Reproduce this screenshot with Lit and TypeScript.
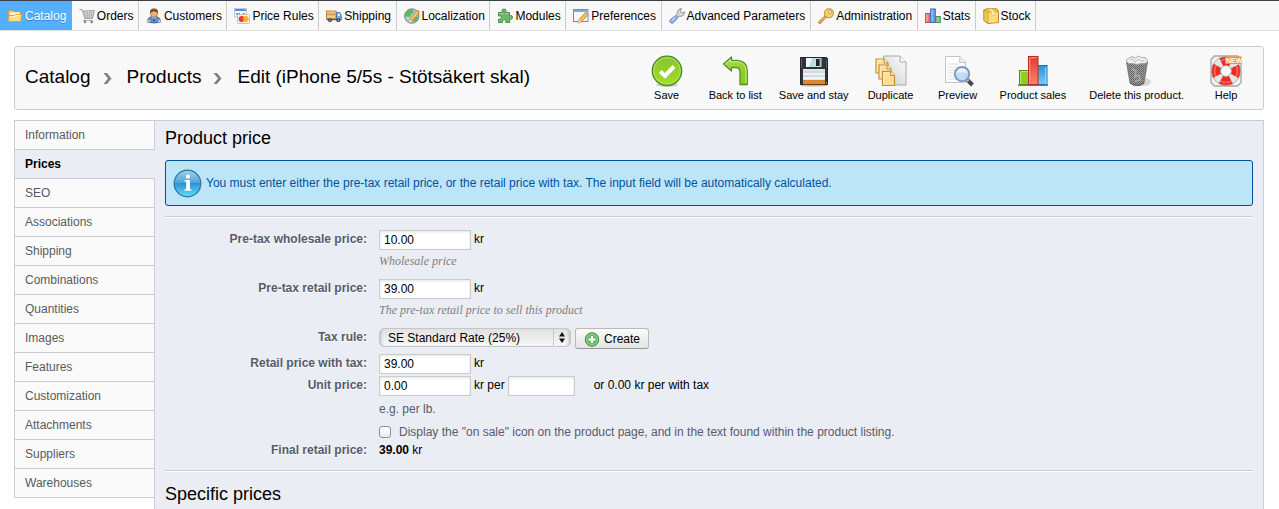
import { LitElement, html, css, svg, TemplateResult } from 'lit';
import { customElement, state } from 'lit/decorators.js';
import { classMap } from 'lit/directives/class-map.js';

const small = (body: unknown) =>
  html`<svg class="icon16" viewBox="0 0 16 16" aria-hidden="true">${body}</svg>`;

const large = (body: unknown) =>
  html`<svg class="icon32" viewBox="0 0 32 32" aria-hidden="true">${body}</svg>`;

const menu: { label: string; icon: TemplateResult }[] = [
  {
    label: 'Catalog',
    icon: small(svg`
      <path d="M1.5 13.500V3.500Q1.500 2.500 2.500 2.500H6L7 3.500H13.500V6" fill="#f0c860" stroke="#cf9d33"/>
      <path d="M3 4.500H12.500V8H3Z" fill="#fff" stroke="#e8d9ae" stroke-width=".6"/>
      <path d="M1.500 13.500L2 7.500H7L8.500 6.500H14.500L13.800 13.500Z" fill="#fbe08a" stroke="#d8a63c"/>
      <path d="M3 8.500H7.500L9 7.500H13.500" stroke="#fff6cf" fill="none"/>`),
  },
  {
    label: 'Orders',
    icon: small(svg`
      <path d="M.5 1.500H3L6 10.500H13.500L15.500 2.500L3.300 3" fill="#e6e6e6" stroke="#979797" stroke-width=".9"/>
      <path d="M6 3V10M8.300 3V10M10.600 3V10M12.900 3V10M3.800 5H14.500M4.500 7.100H14M5 9H14" stroke="#a4a4a4" stroke-width=".7"/>
      <path d="M6.500 10.500L4.500 12.700H14" fill="none" stroke="#a5a5a5"/>
      <circle cx="6" cy="14" r="1.300" fill="#858585"/><circle cx="12.700" cy="14" r="1.300" fill="#858585"/>`),
  },
  {
    label: 'Customers',
    icon: small(svg`
      <path d="M1.200 14Q1.500 9.500 5.500 8.500H10.500Q14.500 9.500 14.800 14Q8 16 1.200 14Z" fill="#5b8fd0" stroke="#3d6aa8"/>
      <path d="M6 8.500L8 14L10 8.500Z" fill="#d9e8f8"/><path d="M7.400 9.500H8.600L9 13L8 14L7 13Z" fill="#2f5ca0"/>
      <ellipse cx="8" cy="5.300" rx="3.500" ry="4" fill="#eab07c" stroke="#a4683a" stroke-width=".7"/>
      <path d="M4 5.400Q3.300 .5 8 .5Q12.700 .5 12 5.400Q11 3.600 8.500 3.500Q5.500 3.400 4 5.400Z" fill="#8a4a1f"/>
      <circle cx="2.600" cy="13.200" r="1.400" fill="#f1bf8e"/><circle cx="13.400" cy="13.200" r="1.400" fill="#f1bf8e"/>`),
  },
  {
    label: 'Price Rules',
    icon: small(svg`
      <rect x=".5" y=".5" width="12" height="8.500" fill="#f4f8fd" stroke="#b4c9e4"/>
      <rect x="1" y="1" width="11" height="2" fill="#5f8fd0"/><path d="M2.500 5L3.200 7L4 5M5.500 5V7M7 7H8.200M9.500 7V5L11 7" stroke="#3f66b0" fill="none" stroke-width=".9"/>
      <rect x="3.500" y="6.500" width="12" height="9" rx="1" fill="#fff3dc" stroke="#c9c3b4"/>
      <circle cx="7.700" cy="11" r="3" fill="#e8323c"/><circle cx="11.600" cy="11" r="3" fill="#f6b02c"/><path d="M9.650 8.700Q11.200 11 9.650 13.300Q8.200 11 9.650 8.700" fill="#f07030"/>`),
  },
  {
    label: 'Shipping',
    icon: small(svg`
      <rect x=".5" y="3" width="9.500" height="7.500" fill="#f2c987" stroke="#b98b4c"/>
      <rect x="1" y="5.500" width="8.500" height="1.800" fill="#cd9b58"/>
      <path d="M10.500 4.500H13.500Q14.700 4.500 15.200 8V11.500H10.500Z" fill="#7ea9dc" stroke="#4872a8"/>
      <path d="M11.700 5.500H13.400L14.200 8H11.700Z" fill="#e6f1fb"/><path d="M.5 11H15.500V12.300H.5Z" fill="#5a6270"/>
      <circle cx="4" cy="12.200" r="1.900" fill="#3d3d3d"/><circle cx="12.300" cy="12.200" r="1.900" fill="#3d3d3d"/>
      <circle cx="4" cy="12.200" r=".7" fill="#ccc"/><circle cx="12.300" cy="12.200" r=".7" fill="#ccc"/>`),
  },
  {
    label: 'Localization',
    icon: small(svg`
      <circle cx="7.800" cy="8" r="7.200" fill="#a9d6ee" stroke="#55906a"/>
      <path d="M2 4Q5 .8 9 1.500L10 4L7 6.500L6 9L3 8.500L1.200 9Q.8 6 2 4ZM8 10L12 8.500L14.700 9Q14 12.500 11 14.300L8.500 13Z" fill="#63b561"/>
      <path d="M4.500 14.800L5.500 11.500L12.700 2.500L15.300 4.500L8 13.400Z" fill="#f7c15a" stroke="#b87a2e" stroke-width=".8"/>
      <path d="M12.700 2.500L13.600 1.600L16 3.500L15.300 4.500Z" fill="#e59b8c"/><path d="M4.500 14.800L5.500 11.500L8 13.400Z" fill="#f6e2c0"/>`),
  },
  {
    label: 'Modules',
    icon: small(svg`
      <path d="M1.500 4.500H5.500Q4 1 7 1Q10 1 8.700 4.500H12.500V8Q15.500 6.700 15.500 9.500Q15.500 12.200 12.500 11V14.500H8.800Q10 11.800 7.200 11.800Q4.500 11.800 5.500 14.500H1.500V11Q4.500 12 4.500 9.500Q4.500 7 1.500 8Z" fill="#6fb56d" stroke="#4c934c"/>
      <path d="M2.500 5.500H6.500M8.500 5.500H11.500" stroke="#a5d8a2"/>`),
  },
  {
    label: 'Preferences',
    icon: small(svg`
      <rect x=".5" y="1.500" width="14.500" height="12" fill="#f6faff" stroke="#5b8fd6"/><rect x="1" y="2" width="13.500" height="2" fill="#7fabe6"/>
      <path d="M4.800 15L5.800 11.800L12.500 4.500L15 6.600L8.300 14Z" fill="#f7c15a" stroke="#b87a2e" stroke-width=".8"/>
      <path d="M12.500 4.500L13.300 3.700L15.800 5.800L15 6.600Z" fill="#e59b8c"/><path d="M4.800 15L5.800 11.800L8.300 14Z" fill="#f6e2c0"/>`),
  },
  {
    label: 'Advanced Parameters',
    icon: small(svg`
      <path d="M8.200 6.500Q7.500 2.500 11 .8L12.500 .6L11.300 3.500L13 5L15.500 3.800Q15.800 7.500 12.500 8.300L10 8.200L8 10L6.300 8.200Z" fill="#d9d9d9" stroke="#8c8c8c" stroke-width=".9"/>
      <path d="M6.800 7.500L9 9.700L4.600 14.600Q3 16 1.400 14.500Q0 13 1.500 11.400Z" fill="#94b6ee" stroke="#5b7fc4" stroke-width=".9"/><path d="M6.500 9L2.500 12.800" stroke="#d3e2fb"/>`),
  },
  {
    label: 'Administration',
    icon: small(svg`
      <path d="M7.500 7.500L.8 13.500V15.300H3L3.700 14V12.800H5.300L6 11.300L9 9Z" fill="#f3bd42" stroke="#b7802a" stroke-width=".9"/>
      <path d="M10.500 .7Q15.500 .6 15.400 5Q15.300 9.600 10.700 9.800Q6.500 9.600 6.500 5.500Q6.600 1 10.500 .7Z" fill="#f8d060" stroke="#b7802a" stroke-width=".9"/>
      <circle cx="12" cy="4" r="1.500" fill="#fff" stroke="#b7802a" stroke-width=".7"/>`),
  },
  {
    label: 'Stats',
    icon: small(svg`
      <rect x=".6" y="5.500" width="4.500" height="9" fill="#f2767d" stroke="#d34a55"/><rect x="10.800" y="8.500" width="4.500" height="6" fill="#8ccb86" stroke="#4d8f62"/>
      <rect x="5.600" y="1" width="4.700" height="13.500" fill="#6c9fee" stroke="#3a68bd"/><path d="M7 2V13.500" stroke="#a9caff"/><path d="M2 6.500V13.500" stroke="#ffb5b5"/>`),
  },
  {
    label: 'Stock',
    icon: small(svg`
      <path d="M.8 2L4.500 .6L14 .9L15.500 3.500V14.500L5 15.500L.8 12.500Z" fill="#f4c950" stroke="#bd8a26"/>
      <path d="M.8 2L5 4.200V15.500M5 4.200L15.500 3.500" fill="none" stroke="#c39431" stroke-width=".9"/>
      <path d="M5.500 4.700L15 4V14L5.500 15Z" fill="#fbdc79"/><path d="M9 4.500V7.500L12 7.300V4.200L8 .8H5.500Z" fill="#fff2c4" stroke="#d8ae4d" stroke-width=".5"/>`),
  },
];

type Action = { label: string; icon: TemplateResult };

const editActions: Action[] = [
  {
    label: 'Save',
    icon: large(svg`
      <defs><linearGradient id="save" x2="0" y2="1"><stop stop-color="#86c232"/><stop offset="1" stop-color="#a2e023"/></linearGradient></defs>
      <ellipse cx="16" cy="30" rx="11" ry="1.800" fill="#bbb" opacity=".7"/>
      <circle cx="16" cy="15.800" r="14.700" fill="url(#save)" stroke="#4a8d1d" stroke-width="1.300"/>
      <circle cx="16" cy="15.800" r="13.200" fill="none" stroke="#b6e26a"/>
      <path d="M9.300 16.500L14 21L23 11.500" fill="none" stroke="#fff" stroke-width="4"/>`),
  },
  {
    label: 'Back to list',
    icon: large(svg`
      <defs><linearGradient id="back" x2="1" y2="1"><stop stop-color="#a8dc50"/><stop offset="1" stop-color="#86c81a"/></linearGradient></defs>
      <path d="M4.500 9L12.500 2V5.500H18Q28 6 28.300 16V29.500H21V17Q21 12.700 17 12.500H12.500V16Z" fill="url(#back)" stroke="#4f9221" stroke-width="1.300" stroke-linejoin="round"/>
      <path d="M6.500 9L11.400 4.700V6.700H18Q26.800 7 27 16V28.300" fill="none" stroke="#cdf08e"/>`),
  },
  {
    label: 'Save and stay',
    icon: large(svg`
      <ellipse cx="16" cy="30.300" rx="14" ry="1.200" fill="#bbb"/>
      <path d="M2.500 2.500H28.500L29.500 3.500V29.500H2.500Z" fill="#2f333a" stroke="#22252a"/>
      <path d="M8 3H24V12H8Z" fill="#bfe0de"/><path d="M8 3H14L11 12H8Z" fill="#eefaf8"/><rect x="18" y="4" width="3.600" height="7" fill="#20242a"/><path d="M22.500 3H24V12H22.500Z" fill="#7c9395"/>
      <rect x="5" y="14" width="22" height="11.500" fill="#d8e8fa"/><path d="M5 17H27M5 21H27" stroke="#e6bd94" stroke-width=".8"/><path d="M5 19H27M5 23H27" stroke="#fff"/>
      <rect x="5" y="25.300" width="22" height="4" fill="#f0821a"/><rect x="28" y="27.500" width="1" height="1" fill="#fff"/><path d="M3.500 4V13M28.500 5V13" stroke="#5a606a"/>`),
  },
  {
    label: 'Duplicate',
    icon: large(svg`
      <defs><linearGradient id="dup" x1="1" x2="0" y2="1"><stop stop-color="#fff"/><stop offset="1" stop-color="#c9cbcd"/></linearGradient></defs>
      <path d="M8.500 1H25L31 7V30H8.500Z" fill="url(#dup)" stroke="#a5a7aa"/><path d="M25 1V7H31" fill="#fff" stroke="#a5a7aa"/>
      ${[[1, 4], [4, 10], [7.5, 16.500]].map(([x, y]) => svg`<g transform="translate(${x} ${y})">
        <path d="M0 0H8L12 4V14H0Z" fill="#fbdc98" stroke="#c08f2e" stroke-width="1.200"/><path d="M8 0V4H12" fill="#fff5d8" stroke="#c08f2e"/><path d="M1.300 13V1.300H7" fill="none" stroke="#fff0c8"/></g>`)}`),
  },
  {
    label: 'Preview',
    icon: large(svg`
      <path d="M3.500 1.500H18L23.500 7V27.500H3.500Z" fill="#fff" stroke="#c3c5ca"/><path d="M18 1.500L17.500 7.500H23.500" fill="#eee" stroke="#c3c5ca"/>
      <path d="M6 9H17M6 12H15M6 15H13M6 18H12M6 21H13M6 24H16" stroke="#d9dce4"/>
      <path d="M24.500 24L30.500 30" stroke="#4a4b50" stroke-width="4"/><path d="M24 23.500L26.500 26" stroke="#c7c9ce" stroke-width="2.500"/>
      <circle cx="20" cy="19" r="7.200" fill="#b9d4f3" fill-opacity=".85" stroke="#7b95bd" stroke-width="1.800"/><path d="M14.800 18.500Q15.500 13.800 20 13.700Q24.500 13.800 25.200 18Q20 16.500 14.800 18.500Z" fill="#e8f4ff"/>`),
  },
  {
    label: 'Product sales',
    icon: large(svg`
      <defs><linearGradient id="red" x2="0" y2="1"><stop stop-color="#e33b2e"/><stop offset="1" stop-color="#ff8170"/></linearGradient>
      <linearGradient id="blu" x2="0" y2="1"><stop stop-color="#2a92da"/><stop offset="1" stop-color="#7cc6f2"/></linearGradient></defs>
      <path d="M1 30.300H31" stroke="#777" stroke-width="1.500"/>
      <rect x="2.500" y="15.500" width="9" height="14" fill="#8fcc24" stroke="#4e8d1c"/><path d="M3.700 29V16.700H11" fill="none" stroke="#c5e97c"/>
      <rect x="20.500" y="10.500" width="9.500" height="19" fill="url(#blu)" stroke="#1c71ae"/><path d="M28.800 12V29" stroke="#b4e0f8"/>
      <rect x="11.500" y="1.500" width="9.500" height="28" fill="url(#red)" stroke="#b42a22"/><path d="M12.700 29V2.700H20" fill="none" stroke="#ff9a8c"/>`),
  },
];

const otherActions: Action[] = [
  {
    label: 'Delete this product.',
    icon: large(svg`
      <defs><pattern id="mesh" width="2" height="2" patternUnits="userSpaceOnUse"><rect width="2" height="2" fill="#9a9c9d"/><rect width="1" height="1" fill="#5e6061"/><rect x="1" y="1" width="1" height="1" fill="#6f7172"/></pattern></defs>
      <ellipse cx="22" cy="27" rx="8" ry="4" fill="#ccc" opacity=".8"/>
      <path d="M5.500 7L9 28Q16 33 23 28L26.500 7Z" fill="url(#mesh)" stroke="#707273" stroke-width=".8"/>
      <path d="M5.500 7Q5 3.500 9 3L11 1.500L14.500 3L17.500 1L20.500 2.500L24 2.500Q27 4 26.500 7Q24 9 20 8.500L16 9.500L12 8.500Q7 9 5.500 7Z" fill="#f1f1f1" stroke="#a3a3a3" stroke-width=".9"/>
      <path d="M9 5L12 4L14 7L18 4L21 6.500L24 4.500" fill="none" stroke="#bbb"/><path d="M11 14L15 16L14 22L18 20L19 25L14 26" fill="none" stroke="#c4c6c8" stroke-width="1.400" opacity=".6"/><path d="M9 28Q16 33 23 28" fill="none" stroke="#555"/>`),
  },
  {
    label: 'Help',
    icon: large(svg`
      <path d="M4.500 1H27.500L31 4.500V27.500L27.500 31H4.500L1 27.500V4.500Z" fill="#f4f4f4" stroke="#a5a5a5" stroke-width="1.300"/>
      <circle cx="16" cy="16" r="10" fill="none" stroke="#e2e2e2" stroke-width="9"/>
      <circle cx="16" cy="16" r="10" fill="none" stroke="#ea2a24" stroke-width="9" stroke-dasharray="10.300 5.408" stroke-dashoffset="5.150"/>
      <circle cx="16" cy="16" r="11.500" fill="none" stroke="#fff" stroke-width="2" opacity=".25"/>
      <circle cx="16" cy="16" r="14.500" fill="none" stroke="#b98" stroke-width=".7"/><circle cx="16" cy="16" r="5.400" fill="#fafafa" stroke="#b3938f" stroke-width=".8"/>
      <rect x="15" y="1.500" width="17" height="7.500" rx="1" fill="#f5962a"/>
      <text x="16" y="8" class="new" fill="#fff">NEW</text>`),
  },
];

const sections = [
  'Information', 'Prices', 'SEO', 'Associations', 'Shipping', 'Combinations', 'Quantities',
  'Images', 'Features', 'Customization', 'Attachments', 'Suppliers', 'Warehouses',
];

@customElement('app-root')
export class AppRoot extends LitElement {
  @state() private section = 'Prices';

  static styles = css`
    :host {
      display: flex;
      flex-direction: column;
      min-height: 100vh;
      background: #fff;
      color: #000;
      font: 12px/16px "Liberation Sans", Arial, sans-serif;
    }
    * { box-sizing: border-box; }
    a { color: inherit; text-decoration: none; }
    h1, h2, p { margin: 0; font-weight: normal; }
    svg { display: block; flex: none; }
    .icon16 { width: 16px; height: 16px; }
    .icon32 { width: 32px; height: 32px; }

    .menu {
      background: #f8f8f8;
      border-top: 1px solid #3d4048;
      border-bottom: 1px solid #e0e0e0;
    }
    .menu-list {
      display: table;
      width: 81%;
      margin: 0;
      padding: 0;
      list-style: none;
    }
    .menu-cell { display: table-cell; }
    .menu-item {
      display: flex;
      align-items: center;
      gap: 2px;
      height: 29px;
      padding: 0 4px 0 7px;
      border-right: 1px solid #ccc;
      white-space: nowrap;
    }
    .menu-item.current {
      background: #54b0ff;
      border-color: #54b0ff;
      color: #fff;
      text-shadow: 0 1px 0 #3a7fbd;
    }

    .titlebar {
      display: flex;
      justify-content: space-between;
      align-items: center;
      margin: 15px 15px 10px 14px;
      padding: 8px 12px 6px 10px;
      min-height: 64px;
      background: #f8f8f8;
      border: 1px solid #ccc;
      border-radius: 3px;
    }
    .crumbs {
      display: flex;
      align-items: center;
      gap: 12px;
      padding-bottom: 4px;
      font-size: 19px;
      line-height: 24px;
      white-space: nowrap;
    }
    .crumb-arrow { width: 12px; height: 16px; }
    .tools { display: flex; gap: 23px; }
    .tool-group { display: flex; gap: 17px; }
    .tool {
      display: flex;
      flex-direction: column;
      align-items: center;
      min-width: 50px;
      font-size: 11px;
      line-height: 16px;
      white-space: nowrap;
    }
    .new { font: bold 7px "Liberation Sans", Arial, sans-serif; }

    .main {
      flex: 1;
      display: grid;
      grid-template-columns: 141px 1fr;
      margin: 0 15px 0 14px;
    }
    .sections {
      z-index: 1;
      align-self: start;
      border: 1px solid #ccccd7;
      border-width: 1px 0 0 1px;
    }
    .section {
      display: block;
      height: 29px;
      padding: 0 10px;
      line-height: 28px;
      color: #585a5c;
      background: #fafafa;
      border: 1px solid #ccccd7;
      border-width: 0 1px 1px 0;
    }
    .section.current {
      color: #000;
      font-weight: bold;
      background: #ebedf4;
      border-right-color: #ebedf4;
    }
    .panel {
      margin-left: -1px;
      padding: 7px 10px 4px;
      background: #ebedf4;
      border: 1px solid #ccccd7;
      border-bottom: 0;
    }
    .heading { font-size: 18px; line-height: 20px; }
    .notice {
      display: flex;
      align-items: center;
      gap: 4px;
      min-height: 46px;
      margin: 12px 0 10px;
      padding: 7px;
      color: #00529b;
      background: #bde5f8;
      border: 1px solid #00529b;
      border-radius: 3px;
    }
    .info-icon { width: 29px; height: 29px; }
    .rule {
      margin: 0 0 12px;
      border: solid;
      border-width: 1px 0;
      border-color: #ccc transparent #fff;
    }

    .row {
      display: grid;
      grid-template-columns: 202px 1fr;
      column-gap: 12px;
      line-height: 18px;
    }
    .spaced { margin-bottom: 10px; }
    .tight { margin-bottom: 2px; }
    .middle { margin-bottom: 5px; }
    .name {
      text-align: right;
      font-weight: bold;
      color: #585a69;
      text-shadow: 0 1px 0 #fff;
    }
    .field { display: flex; gap: 3px; }
    .box {
      width: 92px;
      height: 20px;
      padding: 0 4px;
      font: inherit;
      color: #000;
      background: #fff;
      border: 1px solid #ccc;
      border-radius: 0;
      box-shadow: inset 0 1px 3px #e4e4e4;
    }
    .box.unit { width: 67px; margin-right: 16px; }
    .note {
      margin-top: 3px;
      font: italic 12px/16px Georgia, "Liberation Serif", serif;
      color: #7f7f7f;
    }
    .plain { margin: 5px 0 7px; line-height: 16px; color: #585a69; }
    .check { display: flex; align-items: center; gap: 8px; line-height: 16px; color: #585a69; }
    .check input {
      appearance: none;
      width: 12px;
      height: 12px;
      margin: 0;
      border: 1px solid #8e8e8e;
      border-radius: 3px;
      background: linear-gradient(#fff, #ececec);
    }
    .check input:checked { background: #54b0ff; }

    .tax { display: flex; align-items: flex-start; gap: 4px; }
    .select { display: grid; align-items: center; }
    .select > * { grid-area: 1 / 1; }
    .select select {
      appearance: none;
      width: 192px;
      height: 19px;
      padding: 0 20px 0 8px;
      font: inherit;
      color: #000;
      border: 1px solid #c6c6c9;
      border-radius: 5px;
      background: linear-gradient(#e2e2e2, #f7f7f7);
      box-shadow: inset 3px 0 3px -2px #bbb, inset -3px 0 3px -2px #bbb;
    }
    .arrows { justify-self: end; width: 18px; height: 17px; pointer-events: none; }
    .create {
      display: flex;
      align-items: center;
      gap: 4px;
      height: 21px;
      padding: 0 8px;
      font: inherit;
      color: #000;
      background: linear-gradient(#fbfbfb, #e4e4e4);
      border: 1px solid #b9b9b9;
      border-bottom-color: #999;
      border-radius: 3px;
    }
    .final { margin: 2px 0 12px; line-height: 16px; }
  `;

  private arrow() {
    return html`<svg class="crumb-arrow" viewBox="0 0 12 16" aria-hidden="true">
      <path d="M.5 4L5 9.500L.5 15H4L8.500 9.500L4 4Z" fill="#808080"/>
    </svg>`;
  }

  private tool(action: Action) {
    return html`<a class="tool" href="#">${action.icon}${action.label}</a>`;
  }

  render() {
    return html`
      <nav class="menu">
        <ul class="menu-list">
          ${menu.map(
            (item, i) => html`<li class="menu-cell"><a href="#" class=${classMap({ 'menu-item': true, current: i === 0 })}>${item.icon}${item.label}</a></li>`
          )}
        </ul>
      </nav>

      <header class="titlebar">
        <h1 class="crumbs">
          <a href="#">Catalog</a>${this.arrow()}
          <a href="#">Products</a>${this.arrow()}
          <span>Edit (iPhone 5/5s - Stötsäkert skal)</span>
        </h1>
        <div class="tools">
          <div class="tool-group">${editActions.map((a) => this.tool(a))}</div>
          <div class="tool-group">${otherActions.map((a) => this.tool(a))}</div>
        </div>
      </header>

      <div class="main">
        <nav class="sections">
          ${sections.map(
            (name) => html`<a
              href="#"
              class=${classMap({ section: true, current: name === this.section })}
              @click=${(e: Event) => { e.preventDefault(); this.section = name; }}
            >${name}</a>`
          )}
        </nav>

        <main class="panel">
          <h2 class="heading">Product price</h2>
          <p class="notice">
            <svg class="info-icon" viewBox="0 0 30 30" aria-hidden="true">
              <defs><linearGradient id="info" x2="0" y2="1"><stop stop-color="#a3d0ef"/><stop offset=".48" stop-color="#4ba3dc"/><stop offset=".5" stop-color="#2f92d4"/><stop offset="1" stop-color="#5fe0f5"/></linearGradient></defs>
              <circle cx="15" cy="15" r="13.800" fill="url(#info)" stroke="#2a7399" stroke-width="1.200"/>
              <circle cx="15.500" cy="8" r="2.200" fill="#fff"/>
              <path d="M12 11.500H17.500V21H19V22.500H12V21H13.700V13H12Z" fill="#fff"/>
            </svg>
            <span>You must enter either the pre-tax retail price, or the retail price with tax. The input field will be automatically calculated.</span>
          </p>
          <hr class="rule" />

          <div class="row spaced">
            <label class="name" for="wholesale">Pre-tax wholesale price:</label>
            <div>
              <div class="field"><input class="box" id="wholesale" .value=${'10.00'} /> kr</div>
              <p class="note">Wholesale price</p>
            </div>
          </div>
          <div class="row spaced">
            <label class="name" for="retail">Pre-tax retail price:</label>
            <div>
              <div class="field"><input class="box" id="retail" .value=${'39.00'} /> kr</div>
              <p class="note">The pre-tax retail price to sell this product</p>
            </div>
          </div>
          <div class="row middle">
            <label class="name" for="tax">Tax rule:</label>
            <div class="tax">
              <div class="select">
                <select id="tax"><option>SE Standard Rate (25%)</option></select>
                <svg class="arrows" viewBox="0 0 18 17" aria-hidden="true">
                  <path d="M.5 0V17" stroke="#c9c9c9"/>
                  <path d="M6 7.500L9 3L12 7.500ZM6 9.500L9 14L12 9.500Z" fill="#111"/>
                </svg>
              </div>
              <button class="create" type="button">
                ${small(svg`
                  <circle cx="8" cy="8.500" r="6.700" fill="#69b866" stroke="#3c8a3d"/>
                  <circle cx="8" cy="8.500" r="5.500" fill="none" stroke="#a6dba0" stroke-width=".8"/>
                  <path d="M8 5V12M4.500 8.500H11.500" stroke="#fff" stroke-width="2.200"/>`)}
                Create
              </button>
            </div>
          </div>
          <div class="row tight">
            <label class="name" for="with-tax">Retail price with tax:</label>
            <div class="field"><input class="box" id="with-tax" .value=${'39.00'} /> kr</div>
          </div>
          <div class="row">
            <label class="name" for="unit-price">Unit price:</label>
            <div>
              <div class="field">
                <input class="box" id="unit-price" .value=${'0.00'} />
                <label for="unit">kr per</label>
                <input class="box unit" id="unit" />
                <span>or 0.00 kr per with tax</span>
              </div>
              <p class="plain">e.g. per lb.</p>
              <label class="check"><input type="checkbox" />Display the "on sale" icon on the product page, and in the text found within the product listing.</label>
            </div>
          </div>
          <div class="row final">
            <span class="name">Final retail price:</span>
            <span><b>39.00</b> kr</span>
          </div>
          <hr class="rule" />
          <h2 class="heading">Specific prices</h2>
        </main>
      </div>
    `;
  }
}
